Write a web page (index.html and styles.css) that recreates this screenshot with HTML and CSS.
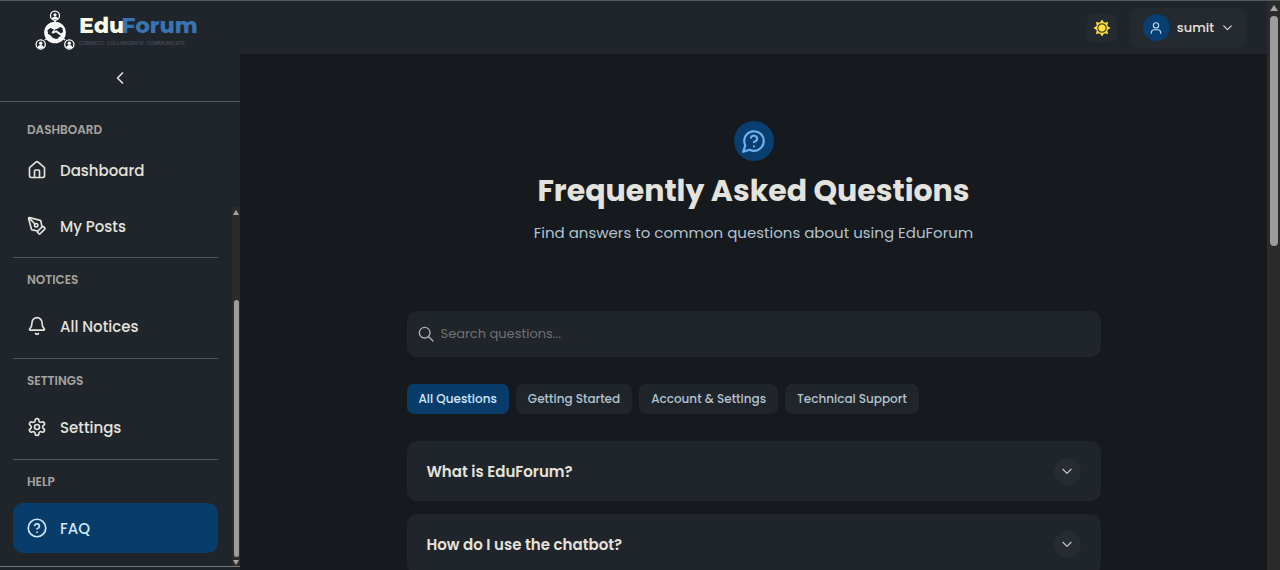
FILE: index.html
```html
<!DOCTYPE html>
<html lang="en">
<head>
<meta charset="utf-8">
<meta name="viewport" content="width=device-width, initial-scale=1">
<title>EduForum - FAQ</title>
<link rel="stylesheet" href="styles.css">
</head>
<body>
<div class="app">
  <header class="header">
    <a class="brand" href="#">
      <svg class="brand-mark" viewBox="0 0 40 40" aria-hidden="true">
        <path d="M20 10V14M10 30l5-4M30 30l-5-4" stroke="#fff" stroke-width="1.6"/>
        <circle cx="20" cy="22.500" r="10.800" fill="#fff"/>
        <g fill="#20252b" stroke="#fff" stroke-width="1.3">
          <circle cx="20" cy="5.7" r="4.5"/><circle cx="5.7" cy="34.4" r="4.6"/><circle cx="34.3" cy="34.4" r="4.6"/>
        </g>
        <g fill="#fff">
          <circle cx="20" cy="4.8" r="1.6"/><path d="M17 9c0-3.500 6-3.500 6 0z"/>
          <circle cx="5.700" cy="33.300" r="1.700"/><path d="M2.500 38c0-4 6.400-4 6.400 0z"/>
          <circle cx="34.300" cy="33.300" r="1.700"/><path d="M31.100 38c0-4 6.400-4 6.400 0z"/>
        </g>
        <path d="M12.500 20l3-2 3.500 1.500-2.500 3 1.500 1.200 3-1.500 5 3.800-2 1-1 1.500-2 .5-3-1-3-3-2-1z" fill="#20252b"/>
        <path d="M20 19.500l3-1 2-1.500 2.500 1 .5 4-2 1.500-4.500-3.200-2.500 1z" fill="#20252b"/>
      </svg>
      <span class="brand-text">
        <span class="brand-name"><span class="brand-edu">Edu</span><span class="brand-forum">Forum</span></span>
        <span class="brand-tag">CONNECT. COLLABORATE. COMMUNICATE</span>
      </span>
    </a>
    <div class="header-actions">
      <button class="theme-button" type="button" aria-label="Toggle theme">
        <svg width="18" height="18" viewBox="-9 -9 18 18" aria-hidden="true">
          <g fill="#fde047">
            <path d="M-2.300-5L0-8.600 2.300-5zM-2.300 5L0 8.600 2.300 5zM-5-2.300L-8.600 0-5 2.300zM5-2.300L8.600 0 5 2.300z"/>
            <path transform="rotate(45)" d="M-2.300-5L0-8.600 2.300-5zM-2.300 5L0 8.600 2.300 5zM-5-2.300L-8.600 0-5 2.300zM5-2.300L8.600 0 5 2.300z"/>
            <circle r="5.700"/>
          </g>
          <circle r="4.200" fill="#fde047" stroke="#4a4626" stroke-width="1.200"/>
        </svg>
      </button>
      <button class="user-button" type="button">
        <span class="avatar">
          <svg class="icon" width="14" height="14" viewBox="0 0 24 24" aria-hidden="true"><circle cx="12" cy="7.500" r="4.500"/><path d="M4 21v-1a5 5 0 0 1 5-5h6a5 5 0 0 1 5 5v1"/></svg>
        </span>
        <span>sumit</span>
        <svg class="icon" width="13" height="13" viewBox="0 0 24 24" aria-hidden="true"><path d="M5 9l7 7 7-7"/></svg>
      </button>
    </div>
  </header>

  <div class="body">
    <aside class="sidebar">
      <button class="collapse" type="button" aria-label="Collapse sidebar">
        <svg class="icon" width="20" height="20" viewBox="0 0 24 24" aria-hidden="true"><path d="M15 18l-6-6 6-6"/></svg>
      </button>
      <nav class="nav">
        <section class="group group-first">
          <h2 class="group-title">DASHBOARD</h2>
          <a class="nav-item" href="#"><svg class="icon" width="20" height="20" viewBox="0 0 24 24" aria-hidden="true"><path d="M15 21v-8a1 1 0 0 0-1-1h-4a1 1 0 0 0-1 1v8"/><path d="M3 10a2 2 0 0 1 .7-1.500l7-6a2 2 0 0 1 2.600 0l7 6A2 2 0 0 1 21 10v9a2 2 0 0 1-2 2H5a2 2 0 0 1-2-2z"/></svg>Dashboard</a>
          <a class="nav-item" href="#"><svg class="icon" width="20" height="20" viewBox="0 0 24 24" aria-hidden="true"><path d="M15.700 21.300a1 1 0 0 1-1.400 0l-1.600-1.600a1 1 0 0 1 0-1.400l5.600-5.600a1 1 0 0 1 1.400 0l1.600 1.600a1 1 0 0 1 0 1.400z"/><path d="M18 13l-1.400-6.900a1 1 0 0 0-.7-.8L3.200 2A1 1 0 0 0 2 3.200l3.400 12.700a1 1 0 0 0 .7.7L13 18"/><path d="M2.300 2.300l7.300 7.300"/><circle cx="11" cy="11" r="2"/></svg>My Posts</a>
        </section>
        <section class="group">
          <h2 class="group-title">NOTICES</h2>
          <a class="nav-item" href="#"><svg class="icon" width="20" height="20" viewBox="0 0 24 24" aria-hidden="true"><path d="M10.300 21a2 2 0 0 0 3.400 0"/><path d="M3.300 15.300A1 1 0 0 0 4 17h16a1 1 0 0 0 .7-1.700C19.400 14 18 12.500 18 8A6 6 0 0 0 6 8c0 4.500-1.400 6-2.700 7.300"/></svg>All Notices</a>
        </section>
        <section class="group">
          <h2 class="group-title">SETTINGS</h2>
          <a class="nav-item" href="#"><svg class="icon" width="20" height="20" viewBox="0 0 24 24" aria-hidden="true"><path d="M12.220 2h-.44a2 2 0 0 0-2 2v.18a2 2 0 0 1-1 1.730l-.43.25a2 2 0 0 1-2 0l-.15-.08a2 2 0 0 0-2.730.73l-.22.380a2 2 0 0 0 .73 2.730l.15.1a2 2 0 0 1 1 1.720v.510a2 2 0 0 1-1 1.740l-.15.090a2 2 0 0 0-.73 2.730l.22.380a2 2 0 0 0 2.730.730l.15-.080a2 2 0 0 1 2 0l.43.250a2 2 0 0 1 1 1.730V20a2 2 0 0 0 2 2h.44a2 2 0 0 0 2-2v-.180a2 2 0 0 1 1-1.730l.43-.250a2 2 0 0 1 2 0l.15.080a2 2 0 0 0 2.730-.730l.22-.390a2 2 0 0 0-.73-2.730l-.15-.080a2 2 0 0 1-1-1.740v-.500a2 2 0 0 1 1-1.740l.15-.090a2 2 0 0 0 .73-2.730l-.22-.380a2 2 0 0 0-2.730-.730l-.15.080a2 2 0 0 1-2 0l-.43-.250a2 2 0 0 1-1-1.730V4a2 2 0 0 0-2-2z"/><circle cx="12" cy="12" r="3"/></svg>Settings</a>
        </section>
        <section class="group">
          <h2 class="group-title">HELP</h2>
          <a class="nav-item nav-item-active" href="#" aria-current="page"><svg class="icon" width="20" height="20" viewBox="0 0 24 24" aria-hidden="true"><circle cx="12" cy="12" r="10.500"/><path d="M9.100 9a3 3 0 0 1 5.800 1c0 2-3 3-3 3M12 17h.010"/></svg>FAQ</a>
        </section>
      </nav>
      <div class="side-scroll" aria-hidden="true"><span class="arrow-up"></span><span class="side-thumb"></span><span class="arrow-down"></span></div>
    </aside>

    <main class="main">
      <div class="content">
        <div class="hero">
          <span class="hero-icon"><svg class="icon" width="26" height="26" viewBox="0 0 24 24" aria-hidden="true"><path d="M7.900 20A9 9 0 1 0 4 16.100L2 22z"/><path d="M9.100 9a3 3 0 0 1 5.800 1c0 2-3 3-3 3M12 17h.010"/></svg></span>
          <h1 class="title">Frequently Asked Questions</h1>
          <p class="subtitle">Find answers to common questions about using EduForum</p>
        </div>
        <label class="search">
          <svg class="icon" width="16" height="16" viewBox="0 0 24 24" aria-hidden="true"><circle cx="10" cy="10" r="8"/><path d="M16 16l6.500 6.500"/></svg>
          <input class="search-input" type="text" aria-label="Search questions" placeholder="Search questions...">
        </label>
        <div class="filters">
          <button class="pill pill-active" type="button">All Questions</button>
          <button class="pill" type="button">Getting Started</button>
          <button class="pill" type="button">Account &amp; Settings</button>
          <button class="pill" type="button">Technical Support</button>
        </div>
        <div class="questions">
          <button class="question" type="button" aria-expanded="false">What is EduForum?
            <span class="chevron"><svg class="icon" width="14" height="14" viewBox="0 0 24 24" aria-hidden="true"><path d="M5 9l7 7 7-7"/></svg></span></button>
          <button class="question" type="button" aria-expanded="false">How do I use the chatbot?
            <span class="chevron"><svg class="icon" width="14" height="14" viewBox="0 0 24 24" aria-hidden="true"><path d="M5 9l7 7 7-7"/></svg></span></button>
        </div>
      </div>
    </main>
  </div>
</div>
<div class="page-scroll" aria-hidden="true"><span class="page-arrow"></span><span class="page-thumb"></span></div>
</body>
</html>
```
FILE: styles.css
```css
* { box-sizing: border-box; }

body {
  margin: 0;
  display: flex;
  height: 100vh;
  overflow: hidden;
  border-top: 1px solid #555a5e;
  background: #16191d;
  color: #e4e2dd;
  font-family: Poppins, Inter, "Liberation Sans", sans-serif;
}

h1, h2, p { margin: 0; }
a { color: inherit; text-decoration: none; }
button { border: 0; font: inherit; color: inherit; cursor: pointer; }

.icon {
  flex: none;
  fill: none;
  stroke: currentColor;
  stroke-width: 2;
  stroke-linecap: round;
  stroke-linejoin: round;
}

.app { flex: 1; min-width: 0; display: flex; flex-direction: column; }

/* Header */
.header {
  flex: none;
  height: 53px;
  display: flex;
  align-items: center;
  justify-content: space-between;
  padding: 0 20px 0 35px;
  background: #20252b;
}
.brand { display: flex; align-items: center; gap: 4px; padding-top: 5px; }
.brand-mark { width: 40px; height: 40px; }
.brand-text { display: flex; flex-direction: column; font-family: Montserrat, Inter, sans-serif; }
.brand-name { display: flex; font-size: 22px; line-height: 26px; font-weight: 800; }
.brand-edu { color: #fbfae6; }
.brand-forum { margin-left: -3px; color: #3a74b0; }
.brand-tag { font-family: Inter, sans-serif; font-size: 5px; line-height: 8px; font-weight: 600; color: #454b52; }
.header-actions { display: flex; align-items: center; gap: 13px; }
.theme-button {
  display: grid;
  place-items: center;
  width: 30px;
  height: 30px;
  padding: 0;
  border-radius: 7px;
  background: #242a2f;
}
.user-button {
  display: flex;
  align-items: center;
  gap: 7px;
  height: 40px;
  padding: 0 13px;
  border-radius: 8px;
  background: #242a2f;
  font-size: 13px;
  font-weight: 500;
}
.avatar {
  display: grid;
  place-items: center;
  width: 27px;
  height: 27px;
  border-radius: 50%;
  background: #083e70;
  color: #b9d9f5;
}

.body { flex: 1; min-height: 0; display: flex; }

/* Sidebar */
.sidebar {
  position: relative;
  flex: none;
  width: 240px;
  background: #20252b;
}
.collapse {
  display: grid;
  place-items: center;
  width: 100%;
  height: 48px;
  padding: 0;
  border-bottom: 1px solid #555a5d;
  background: none;
}
.nav { padding: 6px 22px 6px 13px; border-bottom: 1px solid #74777a; }
.group { padding: 13px 0 7px; border-top: 1px solid #55585a; }
.group-first { padding-bottom: 6px; border-top: 0; }
.group-title {
  margin-bottom: 12px;
  padding-left: 14px;
  font-size: 12px;
  line-height: 18px;
  font-weight: 600;
  color: #a5a39e;
}
.group-first .group-title { margin-bottom: 6px; }
.nav-item {
  display: flex;
  align-items: center;
  gap: 13px;
  height: 50px;
  padding: 0 14px;
  border-radius: 10px;
  font-size: 15px;
  font-weight: 500;
}
.nav-item + .nav-item { margin-top: 6px; }
.nav-item-active { background: #083c6b; color: #d0e7fb; }

.side-scroll {
  position: absolute;
  top: 153px;
  right: 0;
  bottom: 4px;
  width: 8px;
  display: flex;
  flex-direction: column;
  align-items: center;
  justify-content: space-between;
  background: #2b2b2b;
}
.side-thumb { width: 5px; height: 257px; margin-top: auto; border-radius: 3px; background: #9c9c9c; }
.arrow-up, .arrow-down { margin: 3px 0 1px; border: 3px solid transparent; }
.arrow-up { border-top: 0; border-bottom: 5px solid #a5a5a5; }
.arrow-down { border-bottom: 0; border-top: 5px solid #a5a5a5; }

/* Main */
.main { flex: 1; min-width: 0; overflow: hidden; padding: 67px 20px 0; }
.content { max-width: 694px; margin: 0 auto; }
.hero { display: flex; flex-direction: column; align-items: center; text-align: center; }
.hero-icon {
  display: grid;
  place-items: center;
  width: 40px;
  height: 40px;
  border-radius: 50%;
  background: #083e70;
  color: #6fb2ef;
}
.title { margin-top: 11px; font-size: 30px; line-height: 38px; font-weight: 700; }
.subtitle { margin-top: 11px; font-size: 15px; line-height: 24px; color: #b2c3d0; }

.search {
  display: flex;
  align-items: center;
  gap: 7px;
  height: 46px;
  margin-top: 66px;
  padding: 0 11px;
  border-radius: 10px;
  background: #20252b;
  color: #b2b1ad;
}
.search-input {
  flex: 1;
  min-width: 0;
  padding: 0;
  border: 0;
  outline: 0;
  background: none;
  color: #e4e2dd;
  font: inherit;
  font-size: 13px;
}
.search-input::placeholder { color: #70726f; opacity: 1; }

.filters { display: flex; flex-wrap: wrap; gap: 7px; margin-top: 27px; }
.pill {
  height: 30px;
  padding: 0 12px;
  border-radius: 7px;
  background: #20252b;
  color: #b2c3d0;
  font-size: 12px;
  font-weight: 500;
}
.pill-active { background: #083c6b; color: #d0e7fb; }

.questions { display: flex; flex-direction: column; gap: 13px; margin-top: 27px; }
.question {
  display: flex;
  align-items: center;
  justify-content: space-between;
  height: 60px;
  padding: 0 20px;
  border-radius: 10px;
  background: #20252b;
  font-size: 15px;
  font-weight: 600;
  text-align: left;
}
.chevron {
  display: grid;
  place-items: center;
  width: 27px;
  height: 27px;
  border-radius: 50%;
  background: #262c31;
  color: #c8c7c3;
}

/* Page scroll track */
.page-scroll {
  flex: none;
  width: 13px;
  display: flex;
  flex-direction: column;
  align-items: center;
  background: #2b2b2b;
}
.page-arrow { margin: 4px 0 5px; border: 4px solid transparent; border-top: 0; border-bottom: 6px solid #a5a5a5; }
.page-thumb { width: 8px; height: 230px; border-radius: 4px; background: #9c9c9c; }
```
